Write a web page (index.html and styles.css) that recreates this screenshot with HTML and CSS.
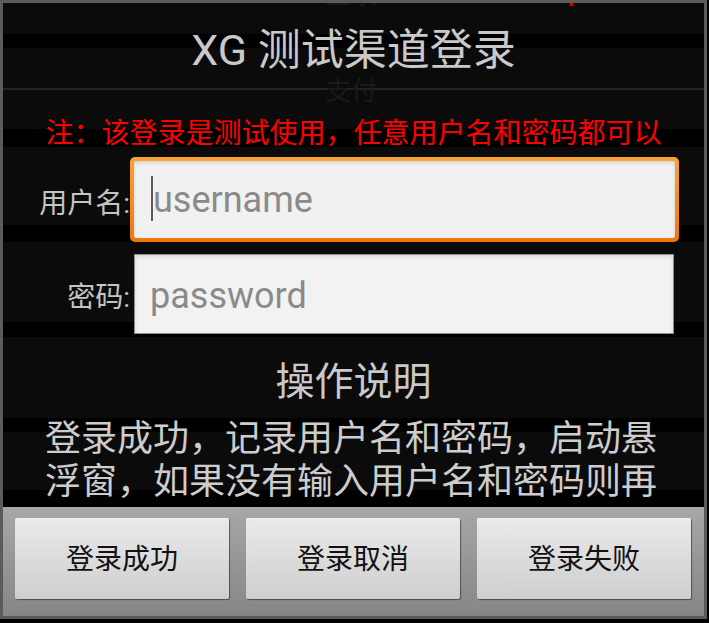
FILE: index.html
```html
<!DOCTYPE html>
<html lang="zh-CN">
<head>
<meta charset="utf-8">
<title>XG 测试渠道登录</title>
<link rel="stylesheet" href="styles.css">
</head>
<body>
<div class="frame">
  <div class="backdrop" aria-hidden="true">
    <span class="ghost ghost-top">登录</span>
    <span class="ghost ghost-pay">支付</span>
    <span class="red-dot"></span>
  </div>
  <div class="dialog-body">
    <h1 class="title">XG 测试渠道登录</h1>
    <p class="note">注：该登录是测试使用，任意用户名和密码都可以</p>
    <div class="row">
      <span class="label">用户名:</span>
      <div class="field-wrap focused">
        <div class="field field-user"><span class="caret"></span><span class="placeholder">username</span></div>
      </div>
    </div>
    <div class="row row-pass">
      <span class="label">密码:</span>
      <div class="field-wrap">
        <div class="field field-pass"><span class="placeholder">password</span></div>
      </div>
    </div>
    <h2 class="heading">操作说明</h2>
    <p class="desc">登录成功，记录用户名和密码，启动悬浮窗，如果没有输入用户名和密码则再</p>
  </div>
  <div class="button-bar">
    <button class="btn" type="button">登录成功</button>
    <button class="btn" type="button">登录取消</button>
    <button class="btn" type="button">登录失败</button>
  </div>
</div>
</body>
</html>
```

FILE: styles.css
```css
html, body {
  margin: 0;
  padding: 0;
}

body {
  width: 709px;
  height: 623px;
  overflow: hidden;
  background: #000;
  font-family: Roboto, "Noto Sans CJK SC", sans-serif;
}

.frame {
  position: relative;
  z-index: 0;
  width: 707px;
  height: 619px;
  box-sizing: border-box;
  border: 3px solid #5b5b5b;
  overflow: hidden;
  display: flex;
  flex-direction: column;
  background: linear-gradient(to bottom,
    #0b0b0b 0 31px,
    #000 31px 45px,
    #0b0b0b 45px 85px,
    #232323 85px 87px,
    #0b0b0b 87px 126px,
    #000 126px 144px,
    #0b0b0b 144px 222px,
    #000 222px 239px,
    #0b0b0b 239px 319px,
    #000 319px 334px,
    #0b0b0b 334px 415px,
    #000 415px 429px,
    #0b0b0b 429px 487px,
    #000 487px 504px,
    #0b0b0b 504px);
}

.backdrop {
  position: absolute;
  inset: 0;
  z-index: -1;
}

.ghost {
  position: absolute;
  font-family: "Noto Sans CJK SC", sans-serif;
  font-size: 26px;
  line-height: 26px;
  color: #1a1a1a;
}

.ghost-top {
  left: 322px;
  top: -24px;
}

.ghost-pay {
  left: 322px;
  top: 73px;
}

.red-dot {
  position: absolute;
  left: 567px;
  top: 0;
  width: 3px;
  height: 3px;
  background: #e00000;
}

.dialog-body {
  height: 504px;
  flex: none;
  overflow: hidden;
  display: flex;
  flex-direction: column;
}

.title {
  margin: 0;
  padding-top: 23px;
  font-size: 43px;
  line-height: 48px;
  font-weight: normal;
  text-align: center;
  color: #c9c9c9;
}

.note {
  margin: 43px 0 0;
  font-size: 28px;
  line-height: 34px;
  text-align: center;
  color: #ff0000;
}

.row {
  display: flex;
  align-items: center;
  margin-top: 6px;
}

.row-pass {
  margin-top: 8px;
}

.label {
  width: 127px;
  padding-top: 8px;
  text-align: right;
  font-size: 28px;
  line-height: 34px;
  color: #c4c4c4;
  white-space: nowrap;
}

.field-wrap {
  width: 541px;
  padding: 4px;
  border-radius: 5px;
}

.field-wrap.focused {
  background: linear-gradient(to bottom, #f9a236, #ee780a);
}

.field {
  display: flex;
  align-items: center;
  box-sizing: border-box;
  background: #f1f1f1;
}

.field-user {
  height: 77px;
  padding-left: 17px;
  border-radius: 2px;
  box-shadow: inset 0 2px 4px rgba(0, 0, 0, 0.12);
}

.field-pass {
  height: 80px;
  width: 540px;
  padding-left: 15px;
  background: #f2f2f2;
  border: 1px solid #8e8e8e;
  box-shadow: inset 0 2px 4px rgba(0, 0, 0, 0.1);
}

.caret {
  width: 2px;
  height: 45px;
  margin-top: -2px;
  background: #5a5a5a;
}

.placeholder {
  font-family: Roboto, sans-serif;
  font-size: 36px;
  line-height: 44px;
  color: #8a8a8a;
}

.field-pass .placeholder {
  margin-top: 3px;
}

.heading {
  margin: 21px 0 0;
  font-size: 39px;
  line-height: 46px;
  font-weight: normal;
  text-align: center;
  color: #c9c9c9;
}

.desc {
  margin: 13px 0 0;
  padding: 0 29px 0 42px;
  font-size: 36px;
  line-height: 43px;
  color: #cdcdcd;
}

.button-bar {
  flex: 1;
  display: grid;
  grid-template-columns: repeat(3, 1fr);
  column-gap: 17px;
  padding: 11px 13px 17px 12px;
  background: linear-gradient(to bottom, #a7a7a7, #868686);
}

.btn {
  height: 81px;
  margin: 0;
  padding: 0;
  border: none;
  border-radius: 2px;
  background: linear-gradient(to bottom, #eaeaea, #cecece);
  box-shadow: 1px 1px 1px rgba(0, 0, 0, 0.45), inset 0 1px 0 rgba(255, 255, 255, 0.35);
  font-family: "Noto Sans CJK SC", sans-serif;
  font-size: 28px;
  color: #111;
  padding-bottom: 3px;
}
```
